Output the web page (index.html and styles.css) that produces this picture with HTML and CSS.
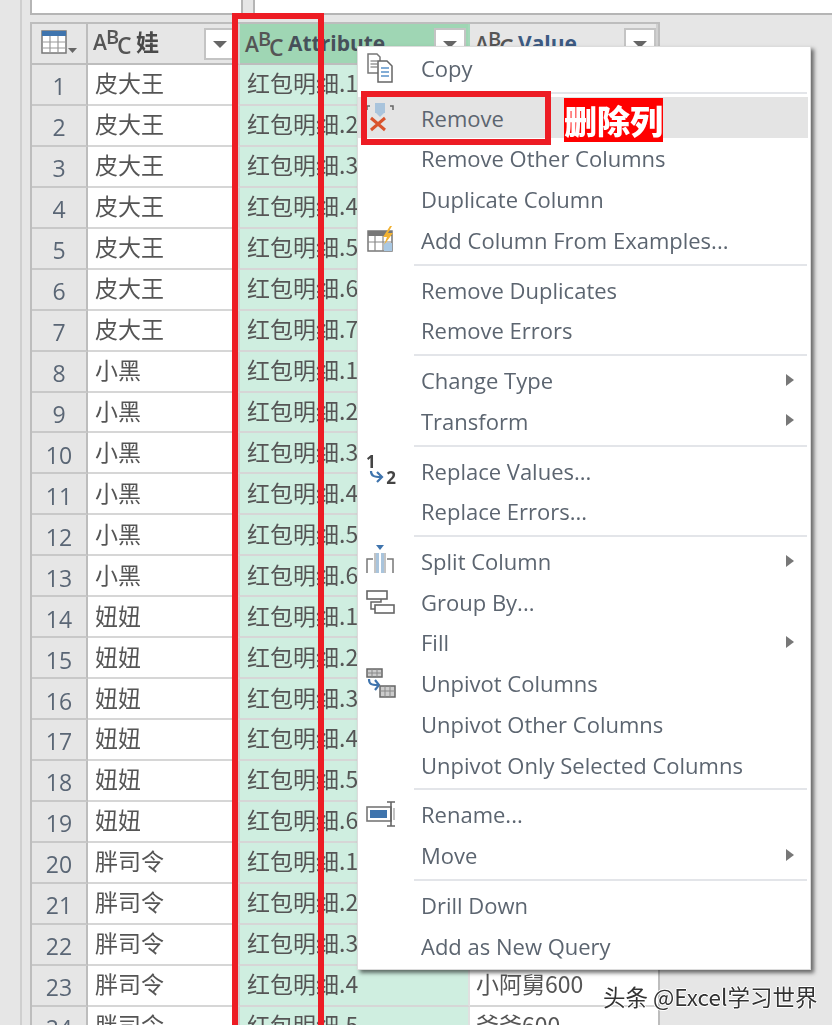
FILE: index.html
```html
<!DOCTYPE html>
<html lang="zh">
<head>
<meta charset="utf-8">
<title>Power Query</title>
<link rel="stylesheet" href="styles.css">
</head>
<body>
<div class="app">
  <div class="side"></div>
  <main class="content">
    <div class="top">
      <div class="formula left"></div>
      <div class="splitter"></div>
      <div class="formula right"></div>
    </div>
    <div class="grid">
      <div class="hd corner">
        <svg class="tbl-ic" width="38" height="28" viewBox="0 0 38 28"><rect x="1" y="1" width="24" height="22" fill="#fff" stroke="#777" stroke-width="1.5"/><rect x="1" y="1" width="24" height="5" fill="#3f74ad"/><path d="M9 6v17M17 6v17M1 12h24M1 18h24" stroke="#999" stroke-width="1.2"/><path d="M27 18h9l-4.500 5z" fill="#666"/></svg>
      </div>
      <div class="hd"><span class="abc"><i>A</i><i class="b">B</i><i class="c">C</i></span><b class="title">娃</b><span class="filter"><s></s></span></div>
      <div class="hd sel low"><span class="abc"><i>A</i><i class="b">B</i><i class="c">C</i></span><b class="title">Attribute</b><span class="filter"><s></s></span></div>
      <div class="hd low"><span class="abc"><i>A</i><i class="b">B</i><i class="c">C</i></span><b class="title val">Value</b><span class="filter last"><s></s></span></div>

      <div class="n">1</div><div class="c1">皮大王</div><div class="c2">红包明细.1</div><div class="c3"></div>
      <div class="n">2</div><div class="c1">皮大王</div><div class="c2">红包明细.2</div><div class="c3"></div>
      <div class="n">3</div><div class="c1">皮大王</div><div class="c2">红包明细.3</div><div class="c3"></div>
      <div class="n">4</div><div class="c1">皮大王</div><div class="c2">红包明细.4</div><div class="c3"></div>
      <div class="n">5</div><div class="c1">皮大王</div><div class="c2">红包明细.5</div><div class="c3"></div>
      <div class="n">6</div><div class="c1">皮大王</div><div class="c2">红包明细.6</div><div class="c3"></div>
      <div class="n">7</div><div class="c1">皮大王</div><div class="c2">红包明细.7</div><div class="c3"></div>
      <div class="n">8</div><div class="c1">小黑</div><div class="c2">红包明细.1</div><div class="c3"></div>
      <div class="n">9</div><div class="c1">小黑</div><div class="c2">红包明细.2</div><div class="c3"></div>
      <div class="n">10</div><div class="c1">小黑</div><div class="c2">红包明细.3</div><div class="c3"></div>
      <div class="n">11</div><div class="c1">小黑</div><div class="c2">红包明细.4</div><div class="c3"></div>
      <div class="n">12</div><div class="c1">小黑</div><div class="c2">红包明细.5</div><div class="c3"></div>
      <div class="n">13</div><div class="c1">小黑</div><div class="c2">红包明细.6</div><div class="c3"></div>
      <div class="n">14</div><div class="c1">妞妞</div><div class="c2">红包明细.1</div><div class="c3"></div>
      <div class="n">15</div><div class="c1">妞妞</div><div class="c2">红包明细.2</div><div class="c3"></div>
      <div class="n">16</div><div class="c1">妞妞</div><div class="c2">红包明细.3</div><div class="c3"></div>
      <div class="n">17</div><div class="c1">妞妞</div><div class="c2">红包明细.4</div><div class="c3"></div>
      <div class="n">18</div><div class="c1">妞妞</div><div class="c2">红包明细.5</div><div class="c3"></div>
      <div class="n">19</div><div class="c1">妞妞</div><div class="c2">红包明细.6</div><div class="c3"></div>
      <div class="n">20</div><div class="c1">胖司令</div><div class="c2">红包明细.1</div><div class="c3"></div>
      <div class="n">21</div><div class="c1">胖司令</div><div class="c2">红包明细.2</div><div class="c3"></div>
      <div class="n">22</div><div class="c1">胖司令</div><div class="c2">红包明细.3</div><div class="c3"></div>
      <div class="n">23</div><div class="c1">胖司令</div><div class="c2">红包明细.4</div><div class="c3">小阿舅600</div>
      <div class="n">24</div><div class="c1">胖司令</div><div class="c2">红包明细.5</div><div class="c3">爷爷600</div>
    </div>
  </main>
</div>

<div class="col-mark"></div>

<nav class="menu">
  <div class="item"><span class="ic"><svg width="30" height="30" viewBox="0 0 30 30"><path d="M2 1h9l3 3v16H2z" fill="#fff" stroke="#777" stroke-width="1.500"/><path d="M4.500 8h7M4.500 11h7M4.500 14h7" stroke="#999" stroke-width="1.300"/><path d="M12 8h9l5 5v16H12z" fill="#fff" stroke="#666" stroke-width="1.500"/><path d="M15 15h8M15 19h8M15 23h8" stroke="#5b93c9" stroke-width="1.600"/></svg></span>Copy</div>
  <div class="sep"></div>
  <div class="item hover"><span class="ic"><svg width="30" height="30" viewBox="0 0 30 30"><path d="M4 3H1v4M24 3h3v4" fill="none" stroke="#666" stroke-width="1.500"/><rect x="9" y="0" width="10" height="10" fill="#a9c4dc"/><path d="M9 9l5 5 5-5z" fill="#a9c4dc"/><path d="M5 15l14 12M19 15L5 27" stroke="#d9532c" stroke-width="3"/></svg></span>Remove</div>
  <div class="item">Remove Other Columns</div>
  <div class="item">Duplicate Column</div>
  <div class="item"><span class="ic"><svg width="30" height="30" viewBox="0 0 30 30"><rect x="2" y="6" width="24" height="20" fill="#fff" stroke="#777" stroke-width="1.500"/><rect x="2" y="6" width="24" height="5" fill="#777"/><path d="M9 11v15M17 11v15M2 17h24" stroke="#888" stroke-width="1.200"/><rect x="18" y="18" width="8" height="8" fill="#a9c8e3"/><path d="M24 1l-7 11h4l-3 8 9-12h-5l4-7z" fill="#f2b233"/></svg></span>Add Column From Examples...</div>
  <div class="sep"></div>
  <div class="item">Remove Duplicates</div>
  <div class="item">Remove Errors</div>
  <div class="sep"></div>
  <div class="item sub">Change Type</div>
  <div class="item sub">Transform</div>
  <div class="sep"></div>
  <div class="item"><span class="ic num"><b class="one">1</b><svg class="arr" width="16" height="14" viewBox="0 0 16 14"><path d="M2 1c0 5 3 6 10 6M8 2l5 5-5 5" fill="none" stroke="#3f74ad" stroke-width="2.200"/></svg><b class="two">2</b></span>Replace Values...</div>
  <div class="item">Replace Errors...</div>
  <div class="sep"></div>
  <div class="item sub"><span class="ic"><svg width="30" height="32" viewBox="0 0 30 32"><path d="M10 0h8l-4 5z" fill="#3f74ad"/><path d="M1 28V14h6M27 28V14h-6" fill="none" stroke="#777" stroke-width="1.500"/><rect x="10" y="8" width="3" height="20" fill="#a9c4dc"/><rect x="15" y="8" width="3" height="20" fill="#a9c4dc"/><path d="M9 8v20M19 8v20" stroke="#888" stroke-width="1"/></svg></span>Split Column</div>
  <div class="item"><span class="ic"><svg width="30" height="24" viewBox="0 0 30 24"><rect x="1" y="1" width="20" height="8" fill="#fff" stroke="#666" stroke-width="1.600"/><rect x="9" y="15" width="19" height="8" fill="#fff" stroke="#666" stroke-width="1.600"/><path d="M15 9v3H5v7h4" fill="none" stroke="#666" stroke-width="1.500"/></svg></span>Group By...</div>
  <div class="item sub">Fill</div>
  <div class="item"><span class="ic"><svg width="30" height="30" viewBox="0 0 30 30"><rect x="1" y="1" width="15" height="8" fill="#ccc" stroke="#666" stroke-width="1.500"/><path d="M6 1v8M11 1v8M1 5h15" stroke="#888" stroke-width="1"/><path d="M3 11c0 5 2 6 9 6M9 12l4 5-4 5" fill="none" stroke="#3f74ad" stroke-width="2.200"/><rect x="14" y="18" width="15" height="11" fill="#ccc" stroke="#666" stroke-width="1.500"/><path d="M19 18v11M24 18v11M14 23h15" stroke="#888" stroke-width="1"/></svg></span>Unpivot Columns</div>
  <div class="item">Unpivot Other Columns</div>
  <div class="item">Unpivot Only Selected Columns</div>
  <div class="sep"></div>
  <div class="item"><span class="ic"><svg width="30" height="26" viewBox="0 0 30 26"><rect x="1" y="6" width="24" height="14" fill="#fff" stroke="#777" stroke-width="1.600"/><rect x="4" y="9" width="17" height="8" fill="#3f74ad"/><path d="M21 1h8M21 25h8M25 1v24" stroke="#666" stroke-width="1.600" fill="none"/><path d="M28 7v12" stroke="#999" stroke-width="1.200"/></svg></span>Rename...</div>
  <div class="item sub">Move</div>
  <div class="sep"></div>
  <div class="item">Drill Down</div>
  <div class="item">Add as New Query</div>
</nav>

<div class="rm-mark"></div>
<div class="label">删除列</div>
<div class="watermark">头条 @Excel学习世界</div>
</body>
</html>
```

FILE: styles.css
```css
* { box-sizing: border-box; }
html, body { margin: 0; height: 100%; }
body {
  width: 832px;
  height: 1025px;
  overflow: hidden;
  position: relative;
  background: #e6e6e6;
  color: #555;
  font-family: "Open Sans", "Noto Sans CJK SC", sans-serif;
  font-size: 23px;
}
.app { display: flex; height: 1025px; filter: blur(.45px); }
.side { width: 22px; flex: none; border-right: 2px solid #cfcfcf; }
.content { flex: 1; padding-left: 8px; min-width: 0; }

.top { display: flex; height: 15px; margin-bottom: 7px; }
.formula { background: #fff; border-bottom: 2px solid #b5b5b5; }
.formula.left { width: 213px; border-left: 2px solid #b5b5b5; border-right: 2px solid #b5b5b5; }
.splitter { width: 10px; }
.formula.right { flex: 1; border-left: 2px solid #b5b5b5; }

.grid {
  display: grid;
  width: 630px;
  grid-template-columns: 56px 152px 230px 188px;
  grid-template-rows: 41px;
  grid-auto-rows: 40.95px;
  border-top: 2px solid #bdbdbd;
  border-left: 2px solid #bdbdbd;
  border-right: 2px solid #bdbdbd;
  font-family: "Noto Sans CJK SC", sans-serif;
  color: #555;
}
.grid > div { border-bottom: 2px solid #d6d6d6; display: flex; align-items: center; min-width: 0; }
.hd { background: #e6e6e6; padding: 0 0 6px 5px; position: relative; border-bottom-color: #bdbdbd !important; border-right: 2px solid #d0d0d0; }
.hd.low { padding-bottom: 2px; }
.hd.sel { background: #9fd6b4; border-right-color: #a5d8ba; }
.hd.corner { padding: 0 0 0 9px; border-right: 2px solid #bdbdbd; }
.abc { font-family: "Open Sans", sans-serif; font-size: 21px; color: #555; display: inline-flex; align-items: center; width: 43px; flex: none; font-weight: 600; }
.abc i { font-style: normal; margin-top: 3px; }
.abc .b { margin-top: -9px; margin-left: -1px; font-size: 20px; }
.abc .c { margin-top: 9px; margin-left: -2px; font-size: 23px; }
.title { font-size: 23px; font-weight: 700; color: #4a4a4a; white-space: nowrap; }
.hd.sel .title { font-family: "Open Sans", sans-serif; font-size: 21px; color: #46505a; }
.title.val { font-family: "Open Sans", sans-serif; font-size: 21px; color: #3c5a82; }
.filter { position: absolute; right: 2px; top: 4px; width: 32px; height: 32px; background: #fff; border: 2px solid #c4c4c4; display: flex; align-items: center; justify-content: center; }
.filter.last { right: 0; }
.filter s { display: block; width: 0; height: 0; border-left: 7px solid transparent; border-right: 7px solid transparent; border-top: 7px solid #666; }
.n { background: #e6e6e6; justify-content: center; border-right: 2px solid #bdbdbd; border-bottom-color: #c8c8c8 !important; color: #5a6675; padding-top: 4px; font-family: "Open Sans", sans-serif; }
.c1 { background: #fff; padding: 0 0 4px 7px; border-right: 2px solid #d0d0d0; }
.c2 { background: #cfeee0; padding: 0 0 4px 7px; border-right: 2px solid #e0e0e0; white-space: nowrap; }
.c3 { background: #fff; padding: 0 0 4px 6px; white-space: nowrap; }

.col-mark { position: absolute; left: 232px; top: 13px; width: 92px; height: 1030px; border: 6px solid #ed1c24; }

.menu {
  position: absolute;
  left: 357px;
  top: 46px;
  width: 454px;
  height: 924px;
  padding: 0.5px 0 0;
  background: #fff;
  border: 1px solid #dcdcdc;
  box-shadow: 3px 3px 4px rgba(0, 0, 0, .55);
  font-size: 22px;
  color: #5c6570;
  filter: blur(.35px);
}
.item { height: 40.7px; padding-left: 63px; padding-right: 3px; margin-right: 2px; display: flex; align-items: center; position: relative; white-space: nowrap; }
.item.hover { background: #e4e4e4; }
.sep { height: 9.150px; margin-left: 56px; margin-right: 3px; display: flex; align-items: center; }
.sep::before { content: ""; flex: 1; height: 2px; background: #e3e5e9; }
.sub::after { content: ""; position: absolute; left: 428px; top: 14px; border-left: 8px solid #777; border-top: 6px solid transparent; border-bottom: 6px solid transparent; }
.ic { position: absolute; left: 8px; top: 50%; transform: translateY(-50%); display: flex; align-items: center; }
.ic svg { display: block; }
.num { width: 30px; height: 34px; font-family: "Open Sans", sans-serif; font-size: 17px; color: #444; }
.num b { position: absolute; font-weight: 700; line-height: 1; }
.num .one { left: 0; top: -1px; }
.num .two { right: 0; top: 15px; }
.num .arr { position: absolute; left: 3px; top: 16px; }

.rm-mark { position: absolute; left: 361px; top: 91px; width: 190px; height: 54px; border: 6px solid #ed1c24; }
.label {
  position: absolute;
  left: 564px;
  top: 98px;
  width: 99px;
  height: 44px;
  background: #ff0000;
  color: #fff;
  font-family: "Noto Sans CJK SC", sans-serif;
  font-weight: 900;
  font-size: 33px;
  line-height: 44px;
  text-align: center;
  white-space: nowrap;
}
.watermark {
  position: absolute;
  left: 603px;
  top: 981px;
  font-family: "Noto Sans CJK SC", sans-serif;
  font-size: 22.500px;
  line-height: 30px;
  color: #333;
  white-space: nowrap;
  text-shadow: 1px 0 #fff, -1px 0 #fff, 0 1px #fff, 0 -1px #fff;
}
```
